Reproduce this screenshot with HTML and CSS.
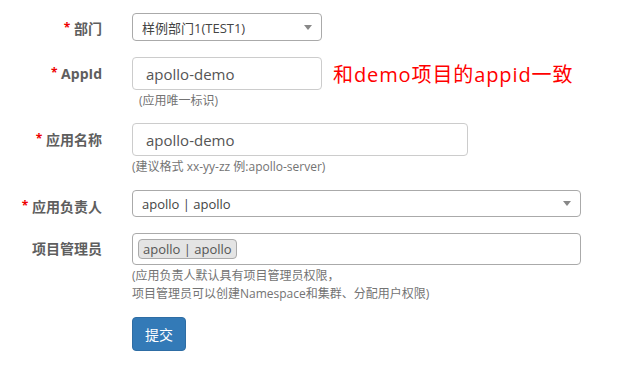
FILE: index.html
```html
<!DOCTYPE html>
<html lang="zh">
<head>
  <meta charset="UTF-8">
  <title>创建项目</title>
  <link rel="stylesheet" href="styles.css">
</head>
<body>
  <form class="app-form">
    <div class="form-group row-dept">
      <label class="control-label"><span class="req">*</span> 部门</label>
      <div class="field">
        <div class="select short">
          <span>样例部门1(TEST1)</span>
          <i class="caret"></i>
        </div>
      </div>
    </div>

    <div class="form-group row-appid">
      <label class="control-label"><span class="req">*</span> AppId</label>
      <div class="field">
        <div class="inline">
          <div class="input short">apollo-demo</div>
          <span class="note">和demo项目的appid一致</span>
        </div>
        <small class="help indent">(应用唯一标识)</small>
      </div>
    </div>

    <div class="form-group row-name">
      <label class="control-label"><span class="req">*</span> 应用名称</label>
      <div class="field">
        <div class="input medium">apollo-demo</div>
        <small class="help">(建议格式 xx-yy-zz 例:apollo-server)</small>
      </div>
    </div>

    <div class="form-group row-owner">
      <label class="control-label"><span class="req">*</span> 应用负责人</label>
      <div class="field">
        <div class="select wide">
          <span>apollo | apollo</span>
          <i class="caret"></i>
        </div>
      </div>
    </div>

    <div class="form-group row-admins">
      <label class="control-label">项目管理员</label>
      <div class="field">
        <div class="tags wide">
          <span class="tag">apollo | apollo</span>
        </div>
        <small class="help">(应用负责人默认具有项目管理员权限，<br>项目管理员可以创建Namespace和集群、分配用户权限)</small>
      </div>
    </div>

    <div class="form-group row-submit">
      <label class="control-label"></label>
      <div class="field">
        <button type="button" class="btn">提交</button>
      </div>
    </div>
  </form>
</body>
</html>
```

FILE: styles.css
```css
body {
  margin: 0;
  font-family: "Open Sans", "Noto Sans CJK SC", sans-serif;
  font-size: 14px;
  color: #333;
  background: #fff;
}
.app-form {
  padding-top: 13px;
}
.form-group {
  display: flex;
  align-items: flex-start;
}
.control-label {
  width: 102px;
  margin-right: 30px;
  text-align: right;
  font-weight: bold;
  color: #5e5e5e;
  font-size: 14px;
  line-height: 20px;
  padding-top: 6px;
  flex-shrink: 0;
}
.req {
  color: #e00;
  font-size: 12px;
  vertical-align: 2px;
}
.field {
  display: flex;
  flex-direction: column;
}
.select, .input, .tags {
  box-sizing: border-box;
  border: 1px solid #aaa;
  border-radius: 4px;
  background: #fff;
  display: flex;
  align-items: center;
}
.select {
  height: 28px;
  padding: 0 9px;
  font-size: 13px;
  color: #444;
  justify-content: space-between;
}
.input {
  height: 33px;
  padding: 0 13px;
  font-size: 15px;
  border-color: #ccc;
  color: #555;
}
.tags {
  height: 32px;
  padding: 0 5px;
}
.short { width: 190px; }
.medium { width: 336px; }
.wide { width: 449px; }
.caret {
  width: 0;
  height: 0;
  border-left: 4px solid transparent;
  border-right: 4px solid transparent;
  border-top: 5px solid #888;
}
.inline {
  display: flex;
  align-items: center;
}
.note {
  margin-left: 11px;
  font-size: 20px;
  letter-spacing: 0.9px;
  color: #f00;
}
.help {
  font-size: 12px;
  color: #737373;
  line-height: 18px;
  margin-top: 2px;
}
.indent {
  padding-left: 7px;
}
.tag {
  box-sizing: border-box;
  height: 20px;
  padding: 0 4px;
  border: 1px solid #aaa;
  border-radius: 4px;
  background: #e4e4e4;
  color: #555;
  font-size: 13px;
  line-height: 18px;
}
.btn {
  width: 54px;
  height: 34px;
  border: 1px solid #2e6da4;
  border-radius: 4px;
  background: #337ab7;
  color: #fff;
  font-family: inherit;
  font-size: 14px;
}
.row-dept { margin-bottom: 16px; }
.row-dept .control-label { padding-top: 5px; }
.row-appid { margin-bottom: 13px; }
.row-name { margin-bottom: 14px; }
.row-owner { margin-bottom: 16px; }
.row-owner .select { height: 27px; }
.row-admins { margin-bottom: 14px; }
```
